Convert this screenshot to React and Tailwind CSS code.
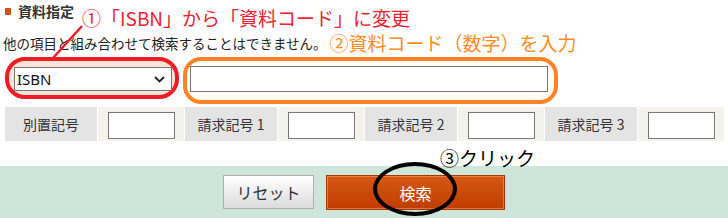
import React from "react";

const font = { fontFamily: '"Noto Sans CJK JP", "Noto Sans", sans-serif' };

function Cell({ label }) {
  return (
    <>
      <div className="w-[92px] h-full bg-[#e4e4e4] flex items-center justify-center text-[14px] text-[#333]">
        {label}
      </div>
      <div className="w-[86px] h-full bg-[#f3f3eb] flex items-center pl-[10px]">
        <div className="w-[67px] h-[27px] mt-[3px] border border-[#767676] bg-white" />
      </div>
    </>
  );
}

export default function App() {
  return (
    <div className="relative w-[728px] h-[218px] bg-white overflow-hidden text-[#222]" style={font}>
      {/* annotation shapes behind form fields */}
      <div className="absolute left-[5px] top-[57px] w-[174px] h-[42px] rounded-[20px] border-4 border-[#ee1c25] bg-[#fde4d8]" />
      <div className="absolute left-[183px] top-[57px] w-[375px] h-[47px] rounded-[18px] border-4 border-[#ff8326] bg-[#fffcf4]" />

      {/* Row 1 */}
      <div className="relative flex items-start h-[32px]">
        <div className="ml-[5px] mt-[8px] w-[6px] h-[7px] bg-[#d0541a]" />
        <div className="ml-[7px] mt-[2px] text-[14px] leading-[18px] font-bold text-[#333]">資料指定</div>
        <div className="ml-[8px] mt-[7px] text-[19px] leading-[22px] text-[#f2202e] whitespace-nowrap">
          ①「ISBN」から「資料コード」に変更
        </div>
      </div>

      {/* Row 2 */}
      <div className="relative flex items-center h-[22px] pl-[3px] whitespace-nowrap">
        <span className="text-[13.5px] text-[#222]">他の項目と組み合わせて検索することはできません。</span>
        <span className="ml-[3px] text-[19px] text-[#ff8c1f]">②資料コード（数字）を入力</span>
      </div>

      {/* Row 3 */}
      <div className="relative z-10 flex items-center h-[50px]">
        <div className="ml-[14px] w-[158px] h-[24px] border border-[#767676] bg-white flex items-center justify-between pl-[2px] pr-[6px]">
          <span className="text-[15px] text-[#111]" style={{ fontFamily: '"Noto Sans", sans-serif' }}>ISBN</span>
          <svg width="11" height="7" viewBox="0 0 11 7">
            <path d="M1 1 L5.5 5.5 L10 1" fill="none" stroke="#222" strokeWidth="1.8" />
          </svg>
        </div>
        <div className="ml-[18px] w-[358px] h-[26px] border border-[#767676] bg-white" />
      </div>

      {/* Row 4 */}
      <div className="relative flex gap-px mt-[3px] ml-[5px] h-[34px]">
        <Cell label="別置記号" />
        <Cell label="請求記号 1" />
        <Cell label="請求記号 2" />
        <Cell label="請求記号 3" />
      </div>

      {/* Row 5 */}
      <div className="mt-[25px] h-[52px] bg-[#cee6da] flex justify-center items-start pt-[9px] gap-[12px]">
        <div className="w-[91px] h-[34px] border border-[#b0b0b0] bg-gradient-to-b from-white to-[#dcdcdc] flex items-center justify-center text-[16px] text-[#333]">
          リセット
        </div>
        <div className="w-[179px] h-[35px] border border-[#a83800] bg-gradient-to-b from-[#d65812] to-[#c03c00] flex items-center justify-center text-[16px] text-white shadow-[inset_0_0_0_1px_rgba(255,170,120,0.5)]">
          検索
        </div>
      </div>

      {/* overlays */}
      <svg className="absolute left-0 top-0" width="100" height="70">
        <line x1="82" y1="26" x2="53" y2="58" stroke="#ee1c25" strokeWidth="2.5" />
      </svg>
      <div className="absolute left-[440px] top-[146px] text-[19px] leading-[24px] text-black whitespace-nowrap">③クリック</div>
      <div className="absolute left-[373px] top-[162px] w-[84px] h-[54px] rounded-[50%] border-4 border-black" />
    </div>
  );
}
